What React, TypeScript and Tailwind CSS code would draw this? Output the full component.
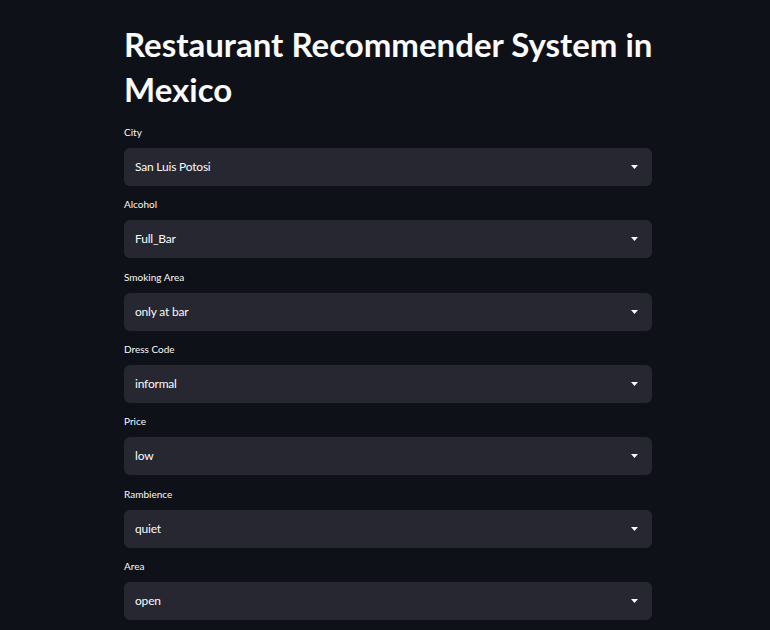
const fields = [
  { label: "City", value: "San Luis Potosi" },
  { label: "Alcohol", value: "Full_Bar" },
  { label: "Smoking Area", value: "only at bar" },
  { label: "Dress Code", value: "informal" },
  { label: "Price", value: "low" },
  { label: "Rambience", value: "quiet" },
  { label: "Area", value: "open" },
];

const SelectBox = ({ label, value }: { label: string; value: string }) => {
  return (
    <div className="mb-[10.33px]">
      <div className="h-4 mb-2 text-[10px] leading-4 text-[#fafafa]">{label}</div>
      <div className="h-[38px] rounded-md bg-[#262730] flex items-center justify-between pl-[11px] pr-[14px]">
        <span className="text-[12px] tracking-[-0.2px] text-[#fafafa]">{value}</span>
        <svg width="7" height="4" viewBox="0 0 7 4" className="fill-[#fafafa]">
          <path d="M0 0h7L3.5 4z" />
        </svg>
      </div>
    </div>
  );
};

export default function App() {
  return (
    <div className="min-h-[630px] w-full bg-[#0e1117] overflow-hidden" style={{ fontFamily: "Lato, sans-serif" }}>
      <div className="ml-[124px] w-[528px] pt-[22px]">
        <h1 className="text-[33px] leading-[45px] font-bold text-[#fafafa] mb-[12px] whitespace-nowrap">
          Restaurant Recommender System in
          <br />
          Mexico
        </h1>
        {fields.map((f) => (
          <SelectBox key={f.label} label={f.label} value={f.value} />
        ))}
      </div>
    </div>
  );
}
